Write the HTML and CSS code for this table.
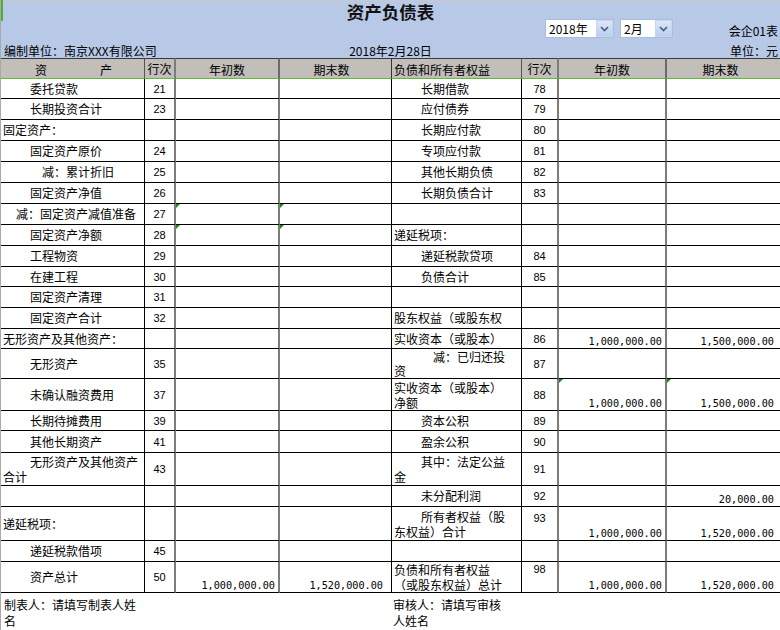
FILE: index.html
```html
<!DOCTYPE html>
<html lang="zh-CN">
<head>
<meta charset="utf-8">
<title>资产负债表</title>
<link rel="stylesheet" href="styles.css">
</head>
<body>
<div class="sheet">
  <div class="marker"></div>
  <header class="band">
    <h1 class="title">资产负债表</h1>
    <div class="band-row">
      <div class="pickers">
        <div class="pick pick-year"><span class="val">2018年</span><span class="btn"><svg width="9" height="6" viewBox="0 0 9 6"><path d="M1 1 L4.5 4.5 L8 1" fill="none" stroke="#4a5f8e" stroke-width="1.7"/></svg></span></div>
        <div class="pick pick-month"><span class="val">2月</span><span class="btn"><svg width="9" height="6" viewBox="0 0 9 6"><path d="M1 1 L4.5 4.5 L8 1" fill="none" stroke="#4a5f8e" stroke-width="1.7"/></svg></span></div>
      </div>
      <div class="formno">会企01表</div>
    </div>
    <div class="meta">
      <div class="org">编制单位：南京XXX有限公司</div>
      <div class="date">2018年2月28日</div>
      <div class="unit">单位：元</div>
    </div>
  </header>

  <table class="grid">
    <colgroup>
      <col class="c-a"><col class="c-b"><col class="c-c"><col class="c-d">
      <col class="c-e"><col class="c-f"><col class="c-g"><col class="c-h">
    </colgroup>
    <thead>
      <tr class="h21">
        <th class="ctr"><span class="spread"><span>资</span><span>产</span></span></th>
        <th class="n">行次</th>
        <th class="v hd">年初数</th>
        <th class="v end hd">期末数</th>
        <th>负债和所有者权益</th>
        <th class="n">行次</th>
        <th class="v hd">年初数</th>
        <th class="v end hd">期末数</th>
      </tr>
    </thead>
    <tbody>
      <tr class="h20"><td class="i1">委托贷款</td><td class="n">21</td><td class="v"></td><td class="v end"></td><td class="i1">长期借款</td><td class="n">78</td><td class="v"></td><td class="v end"></td></tr>
      <tr class="h21"><td class="i1">长期投资合计</td><td class="n">23</td><td class="v"></td><td class="v end"></td><td class="i1">应付债券</td><td class="n">79</td><td class="v"></td><td class="v end"></td></tr>
      <tr class="h21"><td>固定资产：</td><td class="n"></td><td class="v"></td><td class="v end"></td><td class="i1">长期应付款</td><td class="n">80</td><td class="v"></td><td class="v end"></td></tr>
      <tr class="h21"><td class="i1">固定资产原价</td><td class="n">24</td><td class="v"></td><td class="v end"></td><td class="i1">专项应付款</td><td class="n">81</td><td class="v"></td><td class="v end"></td></tr>
      <tr class="h21"><td class="i2">减：累计折旧</td><td class="n">25</td><td class="v"></td><td class="v end"></td><td class="i1">其他长期负债</td><td class="n">82</td><td class="v"></td><td class="v end"></td></tr>
      <tr class="h21"><td class="i1">固定资产净值</td><td class="n">26</td><td class="v"></td><td class="v end"></td><td class="i1">长期负债合计</td><td class="n">83</td><td class="v"></td><td class="v end"></td></tr>
      <tr class="h21"><td class="ih">减：固定资产减值准备</td><td class="n">27</td><td class="v flag"></td><td class="v end flag"></td><td></td><td class="n"></td><td class="v"></td><td class="v end"></td></tr>
      <tr class="h21"><td class="i1">固定资产净额</td><td class="n">28</td><td class="v flag"></td><td class="v end flag"></td><td>递延税项：</td><td class="n"></td><td class="v"></td><td class="v end"></td></tr>
      <tr class="h21"><td class="i1">工程物资</td><td class="n">29</td><td class="v"></td><td class="v end"></td><td class="i1">递延税款贷项</td><td class="n">84</td><td class="v"></td><td class="v end"></td></tr>
      <tr class="h20"><td class="i1">在建工程</td><td class="n">30</td><td class="v"></td><td class="v end"></td><td class="i1">负债合计</td><td class="n">85</td><td class="v"></td><td class="v end"></td></tr>
      <tr class="h21"><td class="i1">固定资产清理</td><td class="n">31</td><td class="v"></td><td class="v end"></td><td></td><td class="n"></td><td class="v"></td><td class="v end"></td></tr>
      <tr class="h21"><td class="i1">固定资产合计</td><td class="n">32</td><td class="v"></td><td class="v end"></td><td><div class="clip">股东权益（或股东权<br>益）：</div></td><td class="n"></td><td class="v"></td><td class="v end"></td></tr>
      <tr class="h20"><td>无形资产及其他资产：</td><td class="n"></td><td class="v"></td><td class="v end"></td><td>实收资本（或股本）</td><td class="n">86</td><td class="v">1,000,000.00</td><td class="v end">1,500,000.00</td></tr>
      <tr class="h30"><td class="i1">无形资产</td><td class="n">35</td><td class="v"></td><td class="v end"></td><td class="i2 l14">减：已归还投<br>资</td><td class="n">87</td><td class="v"></td><td class="v end"></td></tr>
      <tr class="h32"><td class="i1">未确认融资费用</td><td class="n">37</td><td class="v"></td><td class="v end"></td><td class="l15">实收资本（或股本）<br>净额</td><td class="n">88</td><td class="v flag">1,000,000.00</td><td class="v end flag">1,500,000.00</td></tr>
      <tr class="h20"><td class="i1">长期待摊费用</td><td class="n">39</td><td class="v"></td><td class="v end"></td><td class="i1">资本公积</td><td class="n">89</td><td class="v"></td><td class="v end"></td></tr>
      <tr class="h22"><td class="i1">其他长期资产</td><td class="n">41</td><td class="v"></td><td class="v end"></td><td class="i1">盈余公积</td><td class="n">90</td><td class="v"></td><td class="v end"></td></tr>
      <tr class="h33"><td class="i1 l15">无形资产及其他资产<br>合计</td><td class="n">43</td><td class="v"></td><td class="v end"></td><td class="i1 l15">其中：法定公益<br>金</td><td class="n">91</td><td class="v"></td><td class="v end"></td></tr>
      <tr class="h21"><td></td><td class="n"></td><td class="v"></td><td class="v end"></td><td class="i1">未分配利润</td><td class="n">92</td><td class="v"></td><td class="v end">20,000.00</td></tr>
      <tr class="h34"><td>递延税项：</td><td class="n"></td><td class="v"></td><td class="v end"></td><td class="i1 l15">所有者权益（股<br>东权益）合计</td><td class="n up4">93</td><td class="v">1,000,000.00</td><td class="v end">1,520,000.00</td></tr>
      <tr class="h21"><td class="i1">递延税款借项</td><td class="n">45</td><td class="v"></td><td class="v end"></td><td></td><td class="n"></td><td class="v"></td><td class="v end"></td></tr>
      <tr class="h31"><td class="i1">资产总计</td><td class="n">50</td><td class="v">1,000,000.00</td><td class="v end">1,520,000.00</td><td class="l15">负债和所有者权益<br>（或股东权益）总计</td><td class="n up0">98</td><td class="v">1,000,000.00</td><td class="v end">1,520,000.00</td></tr>
    </tbody>
  </table>

  <div class="sign">
    <div class="sign-a">制表人：请填写制表人姓<br>名</div>
    <div class="sign-b">审核人：请填写审核<br>人姓名</div>
  </div>
</div>
</body>
</html>
```

FILE: styles.css
```css
html, body {
  margin: 0;
  padding: 0;
  background: #fff;
}

body {
  width: 780px;
  height: 630px;
  overflow: hidden;
  font-family: "Noto Sans CJK SC", "Noto Sans", sans-serif;
  font-size: 12px;
  color: #000;
}

.sheet {
  position: relative;
  width: 779px;
  height: 630px;
  border-left: 1px solid #a9a9a9;
  overflow: hidden;
}

.marker {
  position: absolute;
  left: -1px;
  top: 0;
  width: 3px;
  height: 21px;
  background: #4fae2e;
  z-index: 2;
}

/* ---------- blue header band ---------- */
.band {
  background: #b7c9e7;
  border-top: 1px solid #c9c9c9;
  height: 57px;
}

.title {
  margin: 0;
  height: 18px;
  line-height: 22px;
  font-size: 17.5px;
  font-weight: bold;
  text-align: center;
  color: #111;
}

.band-row {
  display: flex;
  height: 19px;
}

.pickers {
  display: flex;
  gap: 6px;
  margin-left: 544px;
  align-items: flex-start;
}

.pick {
  box-sizing: border-box;
  height: 19px;
  background: #fff;
  border: 1px solid #a9bddc;
  display: flex;
  align-items: center;
  justify-content: space-between;
}

.pick-year { width: 69px; }
.pick-month { width: 53px; }

.pick .val {
  padding-left: 3px;
  line-height: 16px;
}

.btn {
  box-sizing: border-box;
  width: 17px;
  height: 17px;
  background: linear-gradient(#dce7f8, #bccfee);
  border: 1px solid #c7d6ef;
  display: flex;
  align-items: center;
  justify-content: center;
}

.formno {
  margin-left: auto;
  align-self: flex-end;
  line-height: 14px;
  padding-right: 2px;
}

.meta {
  display: grid;
  grid-template-columns: 1fr auto 1fr;
  height: 20px;
  align-items: end;
  line-height: 14px;
}

.org { padding-left: 3px; }
.unit { text-align: right; padding-right: 2px; }

/* ---------- grid ---------- */
.grid {
  border-collapse: separate;
  border-spacing: 0;
  table-layout: fixed;
  width: 782px;
}

.c-a { width: 144px; }
.c-b { width: 31px; }
.c-c { width: 104px; }
.c-d { width: 112px; }
.c-e { width: 130px; }
.c-f { width: 37px; }
.c-g { width: 108px; }
.c-h { width: 116px; }

.grid th,
.grid td {
  box-sizing: border-box;
  padding: 0 0 0 2px;
  border-bottom: 1px solid #000;
  border-right: 1px solid #000;
  overflow: hidden;
  white-space: nowrap;
  line-height: 14px;
  vertical-align: middle;
  text-align: left;
  font-weight: normal;
}

.grid th {
  background: #c2beb9;
  border-top: 1px solid #3a3a3a;
  border-bottom: 1px solid #5fba3a;
  border-right-color: #555;
  padding-top: 2px;
}

.grid th.ctr { text-align: center; }

.spread {
  display: inline-flex;
  gap: 53px;
}

.grid .n {
  text-align: center;
  padding: 0;
  font-family: "Liberation Sans", Arial, sans-serif;
  font-size: 11px;
  border-right: 2px solid #7c7c7c;
}

.grid th.n {
  font-family: "Noto Sans CJK SC", sans-serif;
  font-size: 12px;
}

.grid .v {
  text-align: right;
  vertical-align: bottom;
  padding: 0 3px 0 0;
  font-family: "DejaVu Sans Mono", "Liberation Mono", monospace;
  font-size: 10.2px;
  line-height: 12px;
  border-right: 2px solid #7c7c7c;
}

.grid .v.end {
  padding-right: 8px;
  border-right: 1px solid #000;
}

.grid th.hd {
  text-align: center;
  vertical-align: middle;
  font-family: "Noto Sans CJK SC", sans-serif;
  font-size: 12px;
  line-height: 14px;
  padding: 2px 0 0 0;
  border-right-color: #6a6a6a;
}

.grid th.hd.end { border-right-color: #333; }

.i1 { text-indent: 27px; }
.i2 { text-indent: 39px; }
.ih { text-indent: 13px; }

.l14 { line-height: 14px; }
.grid .l15 { line-height: 15px; }

.grid .n.up4 { vertical-align: top; padding-top: 4px; }
.grid .n.up0 { vertical-align: top; padding-top: 0; }

.clip {
  height: 20px;
  line-height: 20px;
  overflow: hidden;
}

.h20 { height: 20px; }
.h21 { height: 21px; }
.h22 { height: 22px; }
.h30 { height: 30px; }
.h31 { height: 31px; }
.h32 { height: 32px; }
.h33 { height: 33px; }
.h34 { height: 34px; }

.flag { position: relative; }
.flag::before {
  content: "";
  position: absolute;
  left: 0;
  top: 0;
  border-top: 4px solid #168a16;
  border-right: 4px solid transparent;
}

/* ---------- signatures ---------- */
.sign {
  display: flex;
  padding-top: 4px;
  line-height: 16px;
}

.sign-a {
  width: 389px;
  padding-left: 3px;
}
```
